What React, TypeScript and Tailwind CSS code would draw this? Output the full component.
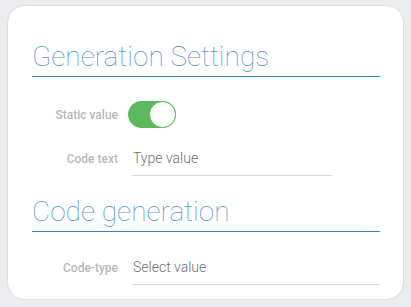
import React from "react";

function Toggle() {
  return (
    <div className="relative w-[48px] h-[27px] rounded-full bg-[#5cb85c] shrink-0">
      <div className="absolute right-0 top-0 w-[27px] h-[27px] rounded-full bg-white border border-[#5cb85c]" />
    </div>
  );
}

export default function App() {
  const font = { fontFamily: "Roboto, 'Liberation Sans', sans-serif" };
  return (
    <div className="w-[411px] h-[307px] bg-[#ebecee] pt-[5px] pl-[7px]" style={font}>
      <div className="w-[397px] h-[295px] rounded-[18px] border border-[#dedfe1] bg-white pl-[24px] pr-[23px] pt-[36px]">
        <div className="text-[28px] leading-[30px] font-thin text-[#5597cf] border-b border-[#2e8dbf] pb-[4px]">
          Generation Settings
        </div>
        <div className="flex items-center mt-[24px]">
          <div className="w-[86px] text-right text-[12px] font-medium text-[#b8b8b8]">Static value</div>
          <div className="ml-[10px]">
            <Toggle />
          </div>
        </div>
        <div className="flex items-center mt-[14px] h-[34px]">
          <div className="w-[86px] text-right text-[12px] font-medium text-[#b8b8b8]">Code text</div>
          <div className="ml-[14px] w-[200px] h-[34px] flex items-center border-b border-[#d9d9d9] pl-[1px] text-[14px] font-light text-[#707070]">
            Type value
          </div>
        </div>
        <div className="mt-[21px] text-[28px] leading-[30px] font-thin text-[#5597cf] border-b border-[#2e8dbf] pb-[4px]">
          Code generation
        </div>
        <div className="flex items-center mt-[19px] h-[34px]">
          <div className="w-[86px] text-right text-[12px] font-medium text-[#b8b8b8]">Code-type</div>
          <div className="ml-[14px] flex-1 h-[34px] flex items-center border-b border-[#d9d9d9] pl-[1px] text-[14px] font-light text-[#707070]">
            Select value
          </div>
        </div>
      </div>
    </div>
  );
}
